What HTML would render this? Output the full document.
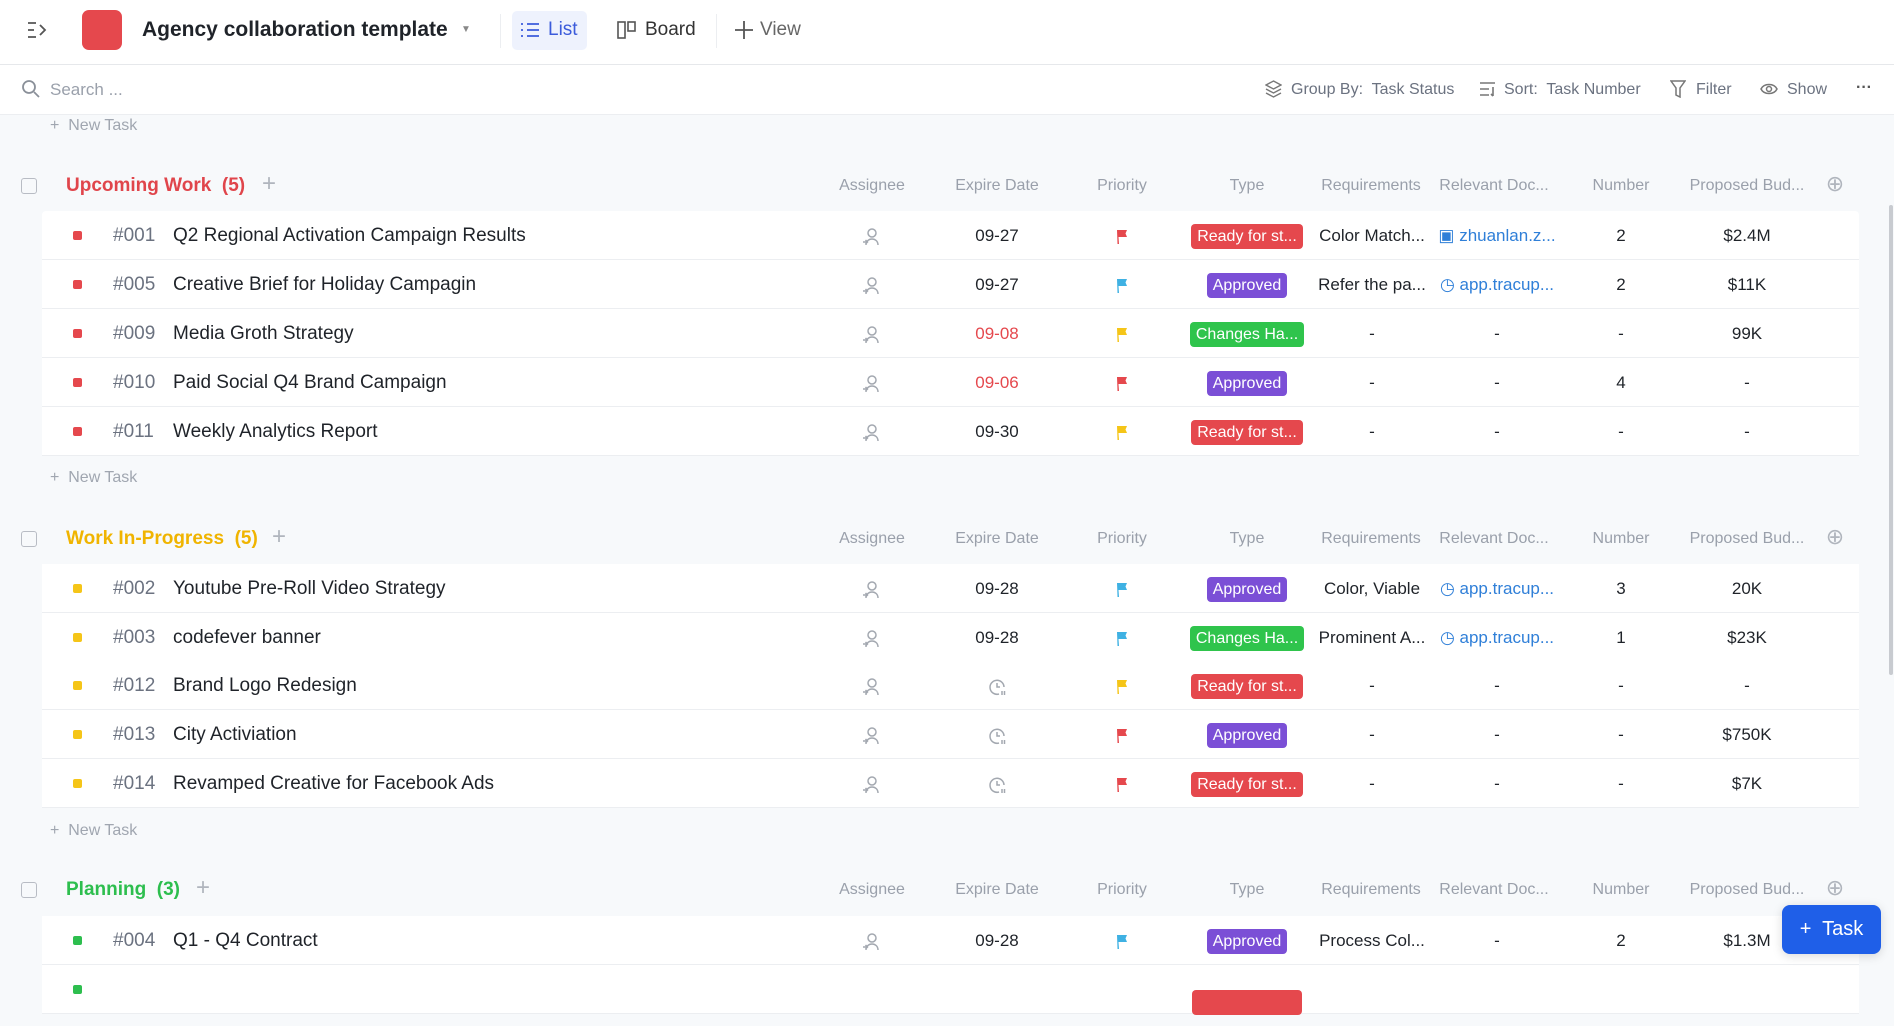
<!DOCTYPE html>
<html><head><meta charset="utf-8"><style>
*{box-sizing:border-box;margin:0;padding:0}
body{width:1894px;height:986px;overflow:hidden;background:#f7f9fb;font-family:"Liberation Sans",sans-serif;position:relative;color:#1f2329}
.abs{position:absolute}
.top{left:0;top:0;width:1894px;height:65px;background:#fff;border-bottom:1px solid #e6e8eb}
.sbar{left:0;top:65px;width:1894px;height:50px;background:#fff;border-bottom:1px solid #eceef1}
.tb{font-size:16px;color:#6b7280;top:80px;line-height:20px}
.nt{left:50px;font-size:16px;color:#a0a6b0;line-height:20px}
.gh{left:66px;font-size:19px;font-weight:bold;line-height:24px}
.ch{position:absolute;font-size:16px;color:#9aa0ab;text-align:center;line-height:24px}
.cb{left:21px;width:16px;height:16px;border:1.5px solid #b8bcc4;border-radius:3px}
.row{position:absolute;left:42px;width:1817px;height:49px;background:#fff;border-bottom:1px solid #eceef1}
.row span{position:absolute;top:0;line-height:49px;font-size:17px;text-align:center}
.row svg{vertical-align:middle}
.dot{width:9px;height:9px;border-radius:2px;top:20px!important;left:31px}
.num{left:71px;color:#6b7280;font-size:19px!important}
.tt{left:131px;font-size:19px!important;text-align:left!important}
.c1{left:800px;width:60px}.c2{left:905px;width:100px}.c3{left:1040px;width:80px}
.c4{left:1143px;width:124px}.c5{left:1268px;width:124px}.c6{left:1392px;width:126px}
.c7{left:1539px;width:80px}.c8{left:1645px;width:120px}
.bd{display:inline-block;color:#fff;border-radius:4px;padding:0 6px;line-height:25px;font-size:16px;vertical-align:middle;font-style:normal}
.r{background:#e5484d}.p{background:#7b4fd6}.g{background:#2fc44c}
.lnk{color:#2f7fd8}
</style></head><body>
<svg width="0" height="0" style="position:absolute"><defs>
<g id="per" fill="none" stroke="#a3a8b0" stroke-width="1.5"><circle cx="10" cy="6" r="4"/><path d="M4 18c0-4 3-6 6-6s6 2 6 6M1 15h4M3.5 13l2 2-2 2"/></g>
<g id="clk" fill="none" stroke="#a3a8b0" stroke-width="1.5"><path d="M12 17A7 7 0 1 1 17 10"/><path d="M10 6v4h3M15 14v4M17.5 14v4"/></g>
<path id="flg" d="M3 2h10l-1.5 3.5L13 9H4.5L5 16H3.5z"/>
</defs></svg>
<div class="abs top"></div>
<svg class="abs" style="left:26px;top:20px" width="22" height="20" viewBox="0 0 22 20" fill="none" stroke="#555" stroke-width="1.8"><path d="M2 3h8M2 10h6M2 17h8M14 5l5 5-5 5"/></svg>
<div class="abs" style="left:82px;top:10px;width:40px;height:40px;background:#e5484d;border-radius:7px"></div>
<div class="abs" style="left:142px;top:16px;font-size:21px;font-weight:bold;line-height:28px">Agency collaboration template</div>
<div class="abs" style="left:461px;top:24px;font-size:10px;color:#888">▼</div>
<div class="abs" style="left:500px;top:14px;width:1px;height:34px;background:#eceef1"></div>
<div class="abs" style="left:512px;top:11px;width:75px;height:39px;background:#eef2fd;border-radius:5px"></div>
<svg class="abs" style="left:520px;top:21px" width="20" height="18" viewBox="0 0 20 18" stroke="#3b5bdb" stroke-width="1.8"><path d="M1 3h2M7 3h12M1 9h2M7 9h12M1 15h2M7 15h12"/></svg>
<div class="abs" style="left:548px;top:18px;font-size:19px;color:#3b5bdb;line-height:24px">List</div>
<svg class="abs" style="left:617px;top:20px" width="20" height="20" viewBox="0 0 20 20" fill="none" stroke="#555" stroke-width="1.6"><rect x="1" y="2" width="7" height="16"/><rect x="11" y="2" width="7" height="9"/></svg>
<div class="abs" style="left:645px;top:18px;font-size:19px;color:#333;line-height:24px">Board</div>
<div class="abs" style="left:716px;top:14px;width:1px;height:34px;background:#eceef1"></div>
<svg class="abs" style="left:734px;top:20px" width="20" height="20" viewBox="0 0 20 20" stroke="#555" stroke-width="1.8"><path d="M10 1v18M1 10h18"/></svg>
<div class="abs" style="left:760px;top:18px;font-size:19px;color:#666;line-height:24px">View</div>

<div class="abs sbar"></div>
<svg class="abs" style="left:21px;top:79px" width="20" height="20" viewBox="0 0 20 20" fill="none" stroke="#8a9099" stroke-width="1.8"><circle cx="8" cy="8" r="6"/><path d="M13 13l5 5"/></svg>
<div class="abs tb" style="left:50px;color:#9aa0ab;font-size:17px">Search ...</div>
<svg class="abs" style="left:1265px;top:80px" width="17" height="18" viewBox="0 0 17 18" fill="none" stroke="#777" stroke-width="1.4"><path d="M8.5 1L16 5l-7.5 4L1 5z M1 9l7.5 4L16 9 M1 13l7.5 4 7.5-4"/></svg>
<div class="abs tb" style="left:1291px">Group By:&nbsp; Task Status</div>
<svg class="abs" style="left:1479px;top:81px" width="17" height="16" viewBox="0 0 17 16" stroke="#777" stroke-width="1.6"><path d="M1 2h15M1 8h9M1 14h9M14 6v9M12 13l2 2"/></svg>
<div class="abs tb" style="left:1504px">Sort:&nbsp; Task Number</div>
<svg class="abs" style="left:1670px;top:80px" width="16" height="18" viewBox="0 0 16 18" fill="none" stroke="#777" stroke-width="1.5"><path d="M1 1h14L10 8v9l-4-2V8z"/></svg>
<div class="abs tb" style="left:1696px">Filter</div>
<svg class="abs" style="left:1760px;top:81px" width="18" height="16" viewBox="0 0 18 16" fill="none" stroke="#777" stroke-width="1.5"><path d="M1 8c3-6 13-6 16 0-3 6-13 6-16 0z"/><circle cx="9" cy="8" r="2.5"/></svg>
<div class="abs tb" style="left:1787px">Show</div>
<div class="abs tb" style="left:1856px;top:78px;color:#555;font-weight:bold">···</div>

<div class="abs nt" style="top:116px">+&nbsp; New Task</div>

<!-- Group 1 -->
<div class="abs cb" style="top:178px"></div>
<div class="abs gh" style="top:174px;color:#e0454b">Upcoming Work&nbsp; (5)</div>
<div class="abs" style="left:262px;top:170px;font-size:24px;color:#b0b5bd">+</div>
<div class="ch" style="left:832px;width:80px;top:174px">Assignee</div>
<div class="ch" style="left:937px;width:120px;top:174px">Expire Date</div>
<div class="ch" style="left:1082px;width:80px;top:174px">Priority</div>
<div class="ch" style="left:1207px;width:80px;top:174px">Type</div>
<div class="ch" style="left:1311px;width:120px;top:174px">Requirements</div>
<div class="ch" style="left:1434px;width:120px;top:174px">Relevant Doc...</div>
<div class="ch" style="left:1581px;width:80px;top:174px">Number</div>
<div class="ch" style="left:1680px;width:134px;top:174px">Proposed Bud...</div>
<div class="ch" style="left:1823px;width:24px;top:172px;font-size:22px;color:#b0b5bd">⊕</div>

<div class="row" style="top:211px;border-radius:4px 4px 0 0"><span class="dot" style="background:#e5484d"></span><span class="num">#001</span><span class="tt">Q2 Regional Activation Campaign Results</span><span class="c1"><svg width="20" height="20"><use href="#per"/></svg></span><span class="c2">09-27</span><span class="c3"><svg width="16" height="18" fill="#e5484d"><use href="#flg"/></svg></span><span class="c4"><i class="bd r">Ready for st...</i></span><span class="c5">Color Match...</span><span class="c6 lnk">▣ zhuanlan.z...</span><span class="c7">2</span><span class="c8">$2.4M</span></div>
<div class="row" style="top:260px"><span class="dot" style="background:#e5484d"></span><span class="num">#005</span><span class="tt">Creative Brief for Holiday Campagin</span><span class="c1"><svg width="20" height="20"><use href="#per"/></svg></span><span class="c2">09-27</span><span class="c3"><svg width="16" height="18" fill="#3fb1e3"><use href="#flg"/></svg></span><span class="c4"><i class="bd p">Approved</i></span><span class="c5">Refer the pa...</span><span class="c6 lnk">◷ app.tracup...</span><span class="c7">2</span><span class="c8">$11K</span></div>
<div class="row" style="top:309px"><span class="dot" style="background:#e5484d"></span><span class="num">#009</span><span class="tt">Media Groth Strategy</span><span class="c1"><svg width="20" height="20"><use href="#per"/></svg></span><span class="c2" style="color:#e5484d">09-08</span><span class="c3"><svg width="16" height="18" fill="#f5c518"><use href="#flg"/></svg></span><span class="c4"><i class="bd g">Changes Ha...</i></span><span class="c5">-</span><span class="c6">-</span><span class="c7">-</span><span class="c8">99K</span></div>
<div class="row" style="top:358px"><span class="dot" style="background:#e5484d"></span><span class="num">#010</span><span class="tt">Paid Social Q4 Brand Campaign</span><span class="c1"><svg width="20" height="20"><use href="#per"/></svg></span><span class="c2" style="color:#e5484d">09-06</span><span class="c3"><svg width="16" height="18" fill="#e5484d"><use href="#flg"/></svg></span><span class="c4"><i class="bd p">Approved</i></span><span class="c5">-</span><span class="c6">-</span><span class="c7">4</span><span class="c8">-</span></div>
<div class="row" style="top:407px"><span class="dot" style="background:#e5484d"></span><span class="num">#011</span><span class="tt">Weekly Analytics Report</span><span class="c1"><svg width="20" height="20"><use href="#per"/></svg></span><span class="c2">09-30</span><span class="c3"><svg width="16" height="18" fill="#f5c518"><use href="#flg"/></svg></span><span class="c4"><i class="bd r">Ready for st...</i></span><span class="c5">-</span><span class="c6">-</span><span class="c7">-</span><span class="c8">-</span></div>
<div class="abs nt" style="top:468px">+&nbsp; New Task</div>

<!-- Group 2 -->
<div class="abs cb" style="top:531px"></div>
<div class="abs gh" style="top:527px;color:#f0b400">Work In-Progress&nbsp; (5)</div>
<div class="abs" style="left:272px;top:523px;font-size:24px;color:#b0b5bd">+</div>
<div class="ch" style="left:832px;width:80px;top:527px">Assignee</div>
<div class="ch" style="left:937px;width:120px;top:527px">Expire Date</div>
<div class="ch" style="left:1082px;width:80px;top:527px">Priority</div>
<div class="ch" style="left:1207px;width:80px;top:527px">Type</div>
<div class="ch" style="left:1311px;width:120px;top:527px">Requirements</div>
<div class="ch" style="left:1434px;width:120px;top:527px">Relevant Doc...</div>
<div class="ch" style="left:1581px;width:80px;top:527px">Number</div>
<div class="ch" style="left:1680px;width:134px;top:527px">Proposed Bud...</div>
<div class="ch" style="left:1823px;width:24px;top:525px;font-size:22px;color:#b0b5bd">⊕</div>

<div class="row" style="top:564px"><span class="dot" style="background:#f5c518"></span><span class="num">#002</span><span class="tt">Youtube Pre-Roll Video Strategy</span><span class="c1"><svg width="20" height="20"><use href="#per"/></svg></span><span class="c2">09-28</span><span class="c3"><svg width="16" height="18" fill="#3fb1e3"><use href="#flg"/></svg></span><span class="c4"><i class="bd p">Approved</i></span><span class="c5">Color, Viable</span><span class="c6 lnk">◷ app.tracup...</span><span class="c7">3</span><span class="c8">20K</span></div>
<div class="row" style="top:613px"><span class="dot" style="background:#f5c518"></span><span class="num">#003</span><span class="tt">codefever banner</span><span class="c1"><svg width="20" height="20"><use href="#per"/></svg></span><span class="c2">09-28</span><span class="c3"><svg width="16" height="18" fill="#3fb1e3"><use href="#flg"/></svg></span><span class="c4"><i class="bd g">Changes Ha...</i></span><span class="c5">Prominent A...</span><span class="c6 lnk">◷ app.tracup...</span><span class="c7">1</span><span class="c8">$23K</span></div>
<div class="row" style="top:661px"><span class="dot" style="background:#f5c518"></span><span class="num">#012</span><span class="tt">Brand Logo Redesign</span><span class="c1"><svg width="20" height="20"><use href="#per"/></svg></span><span class="c2"><svg width="20" height="20"><use href="#clk"/></svg></span><span class="c3"><svg width="16" height="18" fill="#f5c518"><use href="#flg"/></svg></span><span class="c4"><i class="bd r">Ready for st...</i></span><span class="c5">-</span><span class="c6">-</span><span class="c7">-</span><span class="c8">-</span></div>
<div class="row" style="top:710px"><span class="dot" style="background:#f5c518"></span><span class="num">#013</span><span class="tt">City Activiation</span><span class="c1"><svg width="20" height="20"><use href="#per"/></svg></span><span class="c2"><svg width="20" height="20"><use href="#clk"/></svg></span><span class="c3"><svg width="16" height="18" fill="#e5484d"><use href="#flg"/></svg></span><span class="c4"><i class="bd p">Approved</i></span><span class="c5">-</span><span class="c6">-</span><span class="c7">-</span><span class="c8">$750K</span></div>
<div class="row" style="top:759px"><span class="dot" style="background:#f5c518"></span><span class="num">#014</span><span class="tt">Revamped Creative for Facebook Ads</span><span class="c1"><svg width="20" height="20"><use href="#per"/></svg></span><span class="c2"><svg width="20" height="20"><use href="#clk"/></svg></span><span class="c3"><svg width="16" height="18" fill="#e5484d"><use href="#flg"/></svg></span><span class="c4"><i class="bd r">Ready for st...</i></span><span class="c5">-</span><span class="c6">-</span><span class="c7">-</span><span class="c8">$7K</span></div>
<div class="abs nt" style="top:821px">+&nbsp; New Task</div>

<!-- Group 3 -->
<div class="abs cb" style="top:882px"></div>
<div class="abs gh" style="top:878px;color:#2dbe4e">Planning&nbsp; (3)</div>
<div class="abs" style="left:196px;top:874px;font-size:24px;color:#b0b5bd">+</div>
<div class="ch" style="left:832px;width:80px;top:878px">Assignee</div>
<div class="ch" style="left:937px;width:120px;top:878px">Expire Date</div>
<div class="ch" style="left:1082px;width:80px;top:878px">Priority</div>
<div class="ch" style="left:1207px;width:80px;top:878px">Type</div>
<div class="ch" style="left:1311px;width:120px;top:878px">Requirements</div>
<div class="ch" style="left:1434px;width:120px;top:878px">Relevant Doc...</div>
<div class="ch" style="left:1581px;width:80px;top:878px">Number</div>
<div class="ch" style="left:1680px;width:134px;top:878px">Proposed Bud...</div>
<div class="ch" style="left:1823px;width:24px;top:876px;font-size:22px;color:#b0b5bd">⊕</div>
<div class="row" style="top:916px"><span class="dot" style="background:#2dbe4e"></span><span class="num">#004</span><span class="tt">Q1 - Q4 Contract</span><span class="c1"><svg width="20" height="20"><use href="#per"/></svg></span><span class="c2">09-28</span><span class="c3"><svg width="16" height="18" fill="#3fb1e3"><use href="#flg"/></svg></span><span class="c4"><i class="bd p">Approved</i></span><span class="c5">Process Col...</span><span class="c6">-</span><span class="c7">2</span><span class="c8">$1.3M</span></div>
<div class="row" style="top:965px"><span class="dot" style="background:#2dbe4e"></span><span class="c4" style="top:12px"><i class="bd r" style="width:110px">&nbsp;</i></span></div>

<div class="abs" style="left:1889px;top:205px;width:4px;height:470px;background:#c8cbd0;border-radius:2px"></div>
<div class="abs" style="left:1782px;top:905px;width:99px;height:49px;background:#1f5fe8;border-radius:8px;color:#fff;font-size:20px;line-height:49px;text-align:center;box-shadow:0 2px 10px rgba(0,0,0,.15)">+&nbsp; Task</div>
</body></html>
